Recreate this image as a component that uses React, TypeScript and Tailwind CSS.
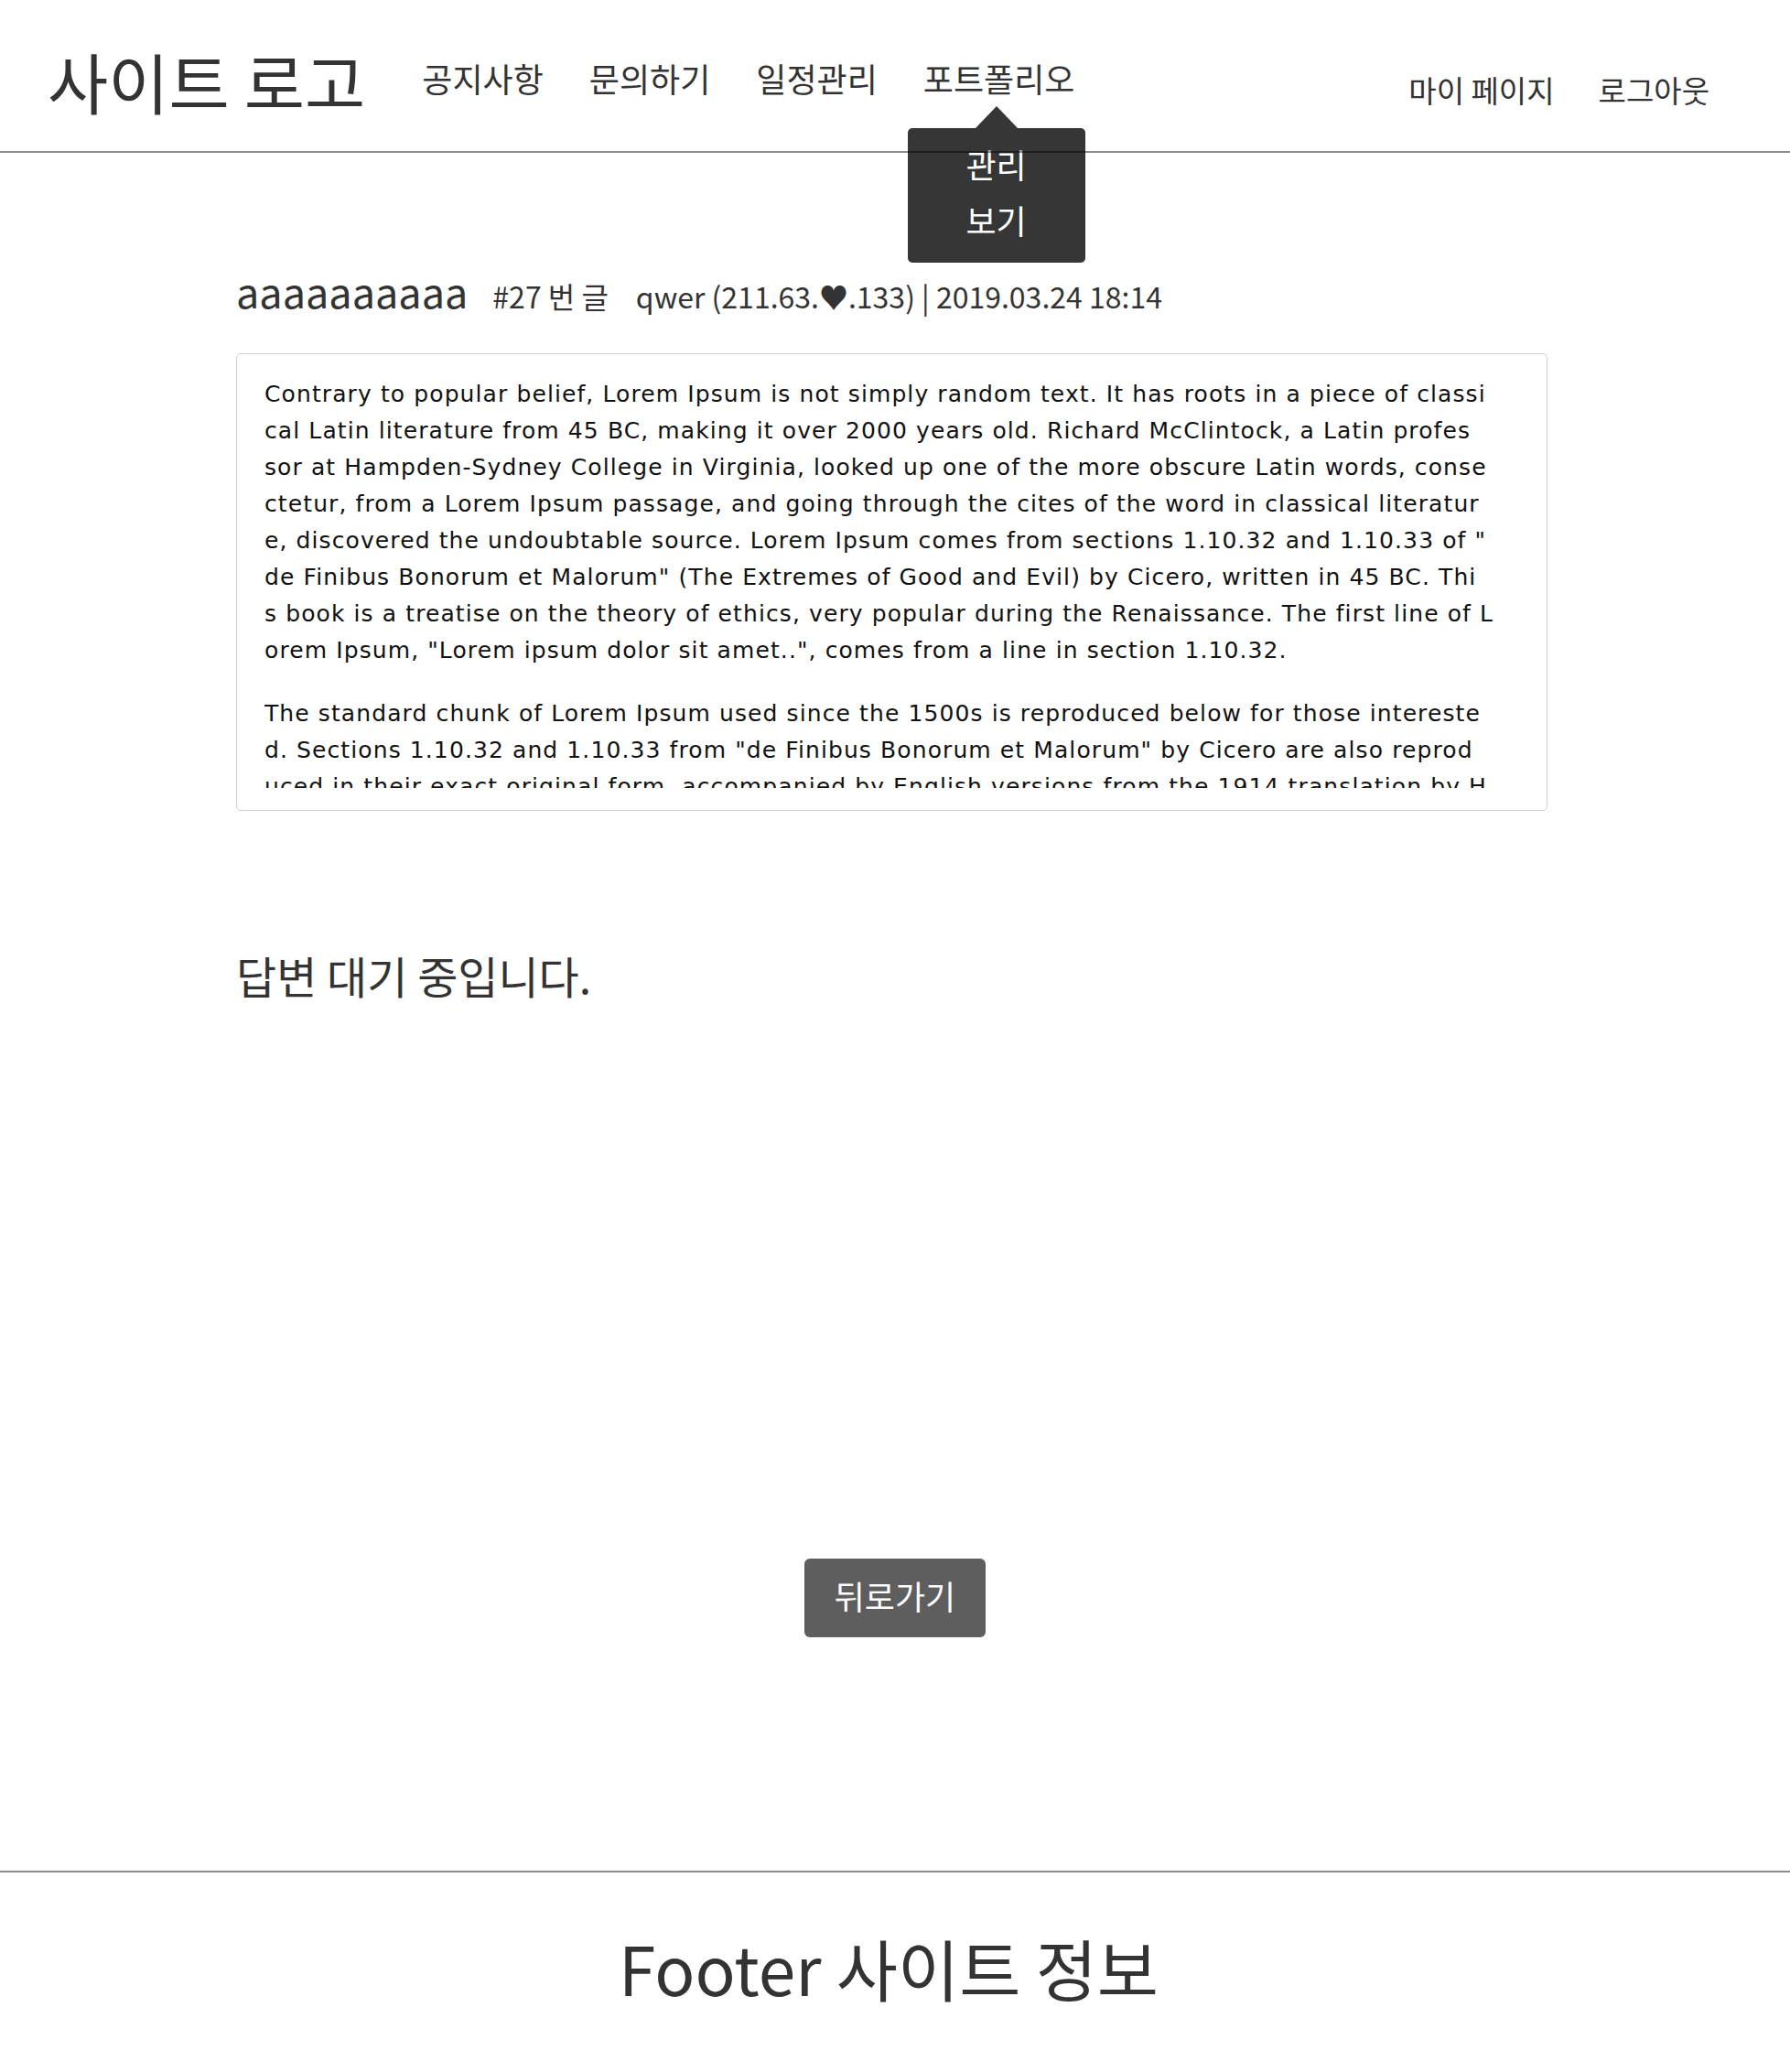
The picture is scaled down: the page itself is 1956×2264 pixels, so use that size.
import React from 'react'

const kr = { fontFamily: '"Noto Sans CJK KR", "Noto Sans", sans-serif' }

// the post body keeps the same line breaks as the original page
const para1 = [
  'Contrary to popular belief, Lorem Ipsum is not simply random text. It has roots in a piece of classi',
  'cal Latin literature from 45 BC, making it over 2000 years old. Richard McClintock, a Latin profes',
  'sor at Hampden-Sydney College in Virginia, looked up one of the more obscure Latin words, conse',
  'ctetur, from a Lorem Ipsum passage, and going through the cites of the word in classical literatur',
  'e, discovered the undoubtable source. Lorem Ipsum comes from sections 1.10.32 and 1.10.33 of "',
  'de Finibus Bonorum et Malorum" (The Extremes of Good and Evil) by Cicero, written in 45 BC. Thi',
  's book is a treatise on the theory of ethics, very popular during the Renaissance. The first line of L',
  'orem Ipsum, "Lorem ipsum dolor sit amet..", comes from a line in section 1.10.32.',
]

const para2 = [
  'The standard chunk of Lorem Ipsum used since the 1500s is reproduced below for those intereste',
  'd. Sections 1.10.32 and 1.10.33 from "de Finibus Bonorum et Malorum" by Cicero are also reprod',
  'uced in their exact original form, accompanied by English versions from the 1914 translation by H',
  '. Rackham.',
]

const Lines = ({ lines }: { lines: string[] }) => (
  <>
    {lines.map((l, i) => (
      <span key={i} className="block">{l}</span>
    ))}
  </>
)

const Header = () => (
  <header className="flex h-[165px] items-start text-[#333]" style={kr}>
    <div className="ml-[52px] pt-[52px] text-[72px] leading-none">사이트 로고</div>
    <nav className="ml-[62px] flex gap-[50px] pt-[67px] text-[36px] leading-none">
      <a>공지사항</a>
      <a>문의하기</a>
      <a>일정관리</a>
      <div className="relative">
        <a>포트폴리오</a>
        <div className="absolute left-1/2 top-[49px] ml-[-3px] flex w-[194px] -translate-x-1/2 flex-col items-center">
          <div className="h-0 w-0 border-x-[23px] border-b-[24px] border-x-transparent border-b-[#363636]" />
          <div className="flex w-full flex-col items-center gap-[25px] rounded-[5px] bg-[#363636] pb-[29px] pt-[21px] text-[36px] text-white">
            <span>관리</span>
            <span>보기</span>
          </div>
        </div>
      </div>
    </nav>
    <div className="ml-auto mr-[88px] flex gap-[48px] pt-[82px] text-[33px] leading-none">
      <a>마이 페이지</a>
      <a>로그아웃</a>
    </div>
  </header>
)

export default function App() {
  return (
    <div className="min-h-[2264px] bg-white">
      <Header />
      <div className="relative z-10 h-[2px] bg-black/45" />

      <main className="ml-[258px] w-[1433px] pt-[128px]" style={kr}>
        <div className="flex items-baseline text-[#333] leading-none">
          <h2 className="text-[45px]">aaaaaaaaaa</h2>
          <span className="ml-[27px] text-[32px]">#27 번 글</span>
          <span className="ml-[30px] text-[32px]">qwer (211.63.♥.133) | 2019.03.24 18:14</span>
        </div>

        <div className="mt-[46px] h-[500px] rounded-[5px] border border-[#cfcfcf] px-[30px] py-[24px]">
          <div
            className="h-[450px] overflow-hidden whitespace-nowrap text-[25px] leading-[40px] tracking-[1.1px] text-[#111]"
            style={{ fontFamily: '"DejaVu Sans", sans-serif' }}
          >
            <p className="mb-[29px]"><Lines lines={para1} /></p>
            <p><Lines lines={para2} /></p>
          </div>
        </div>

        <p className="mt-[155px] text-[48px] leading-none text-[#333]">답변 대기 중입니다.</p>
      </main>

      <div className="mt-[614px] flex justify-center" style={kr}>
        <button className="h-[86px] w-[198px] rounded-[6px] bg-[#5e5e5e] pb-[6px] text-[36px] text-white">뒤로가기</button>
      </div>

      <footer className="mt-[255px] flex h-[221px] items-center justify-center border-t-2 border-[#8a8a8a] pb-[12px] pr-[14px] text-[73px] text-[#333]" style={kr}>
        Footer 사이트 정보
      </footer>
    </div>
  )
}
